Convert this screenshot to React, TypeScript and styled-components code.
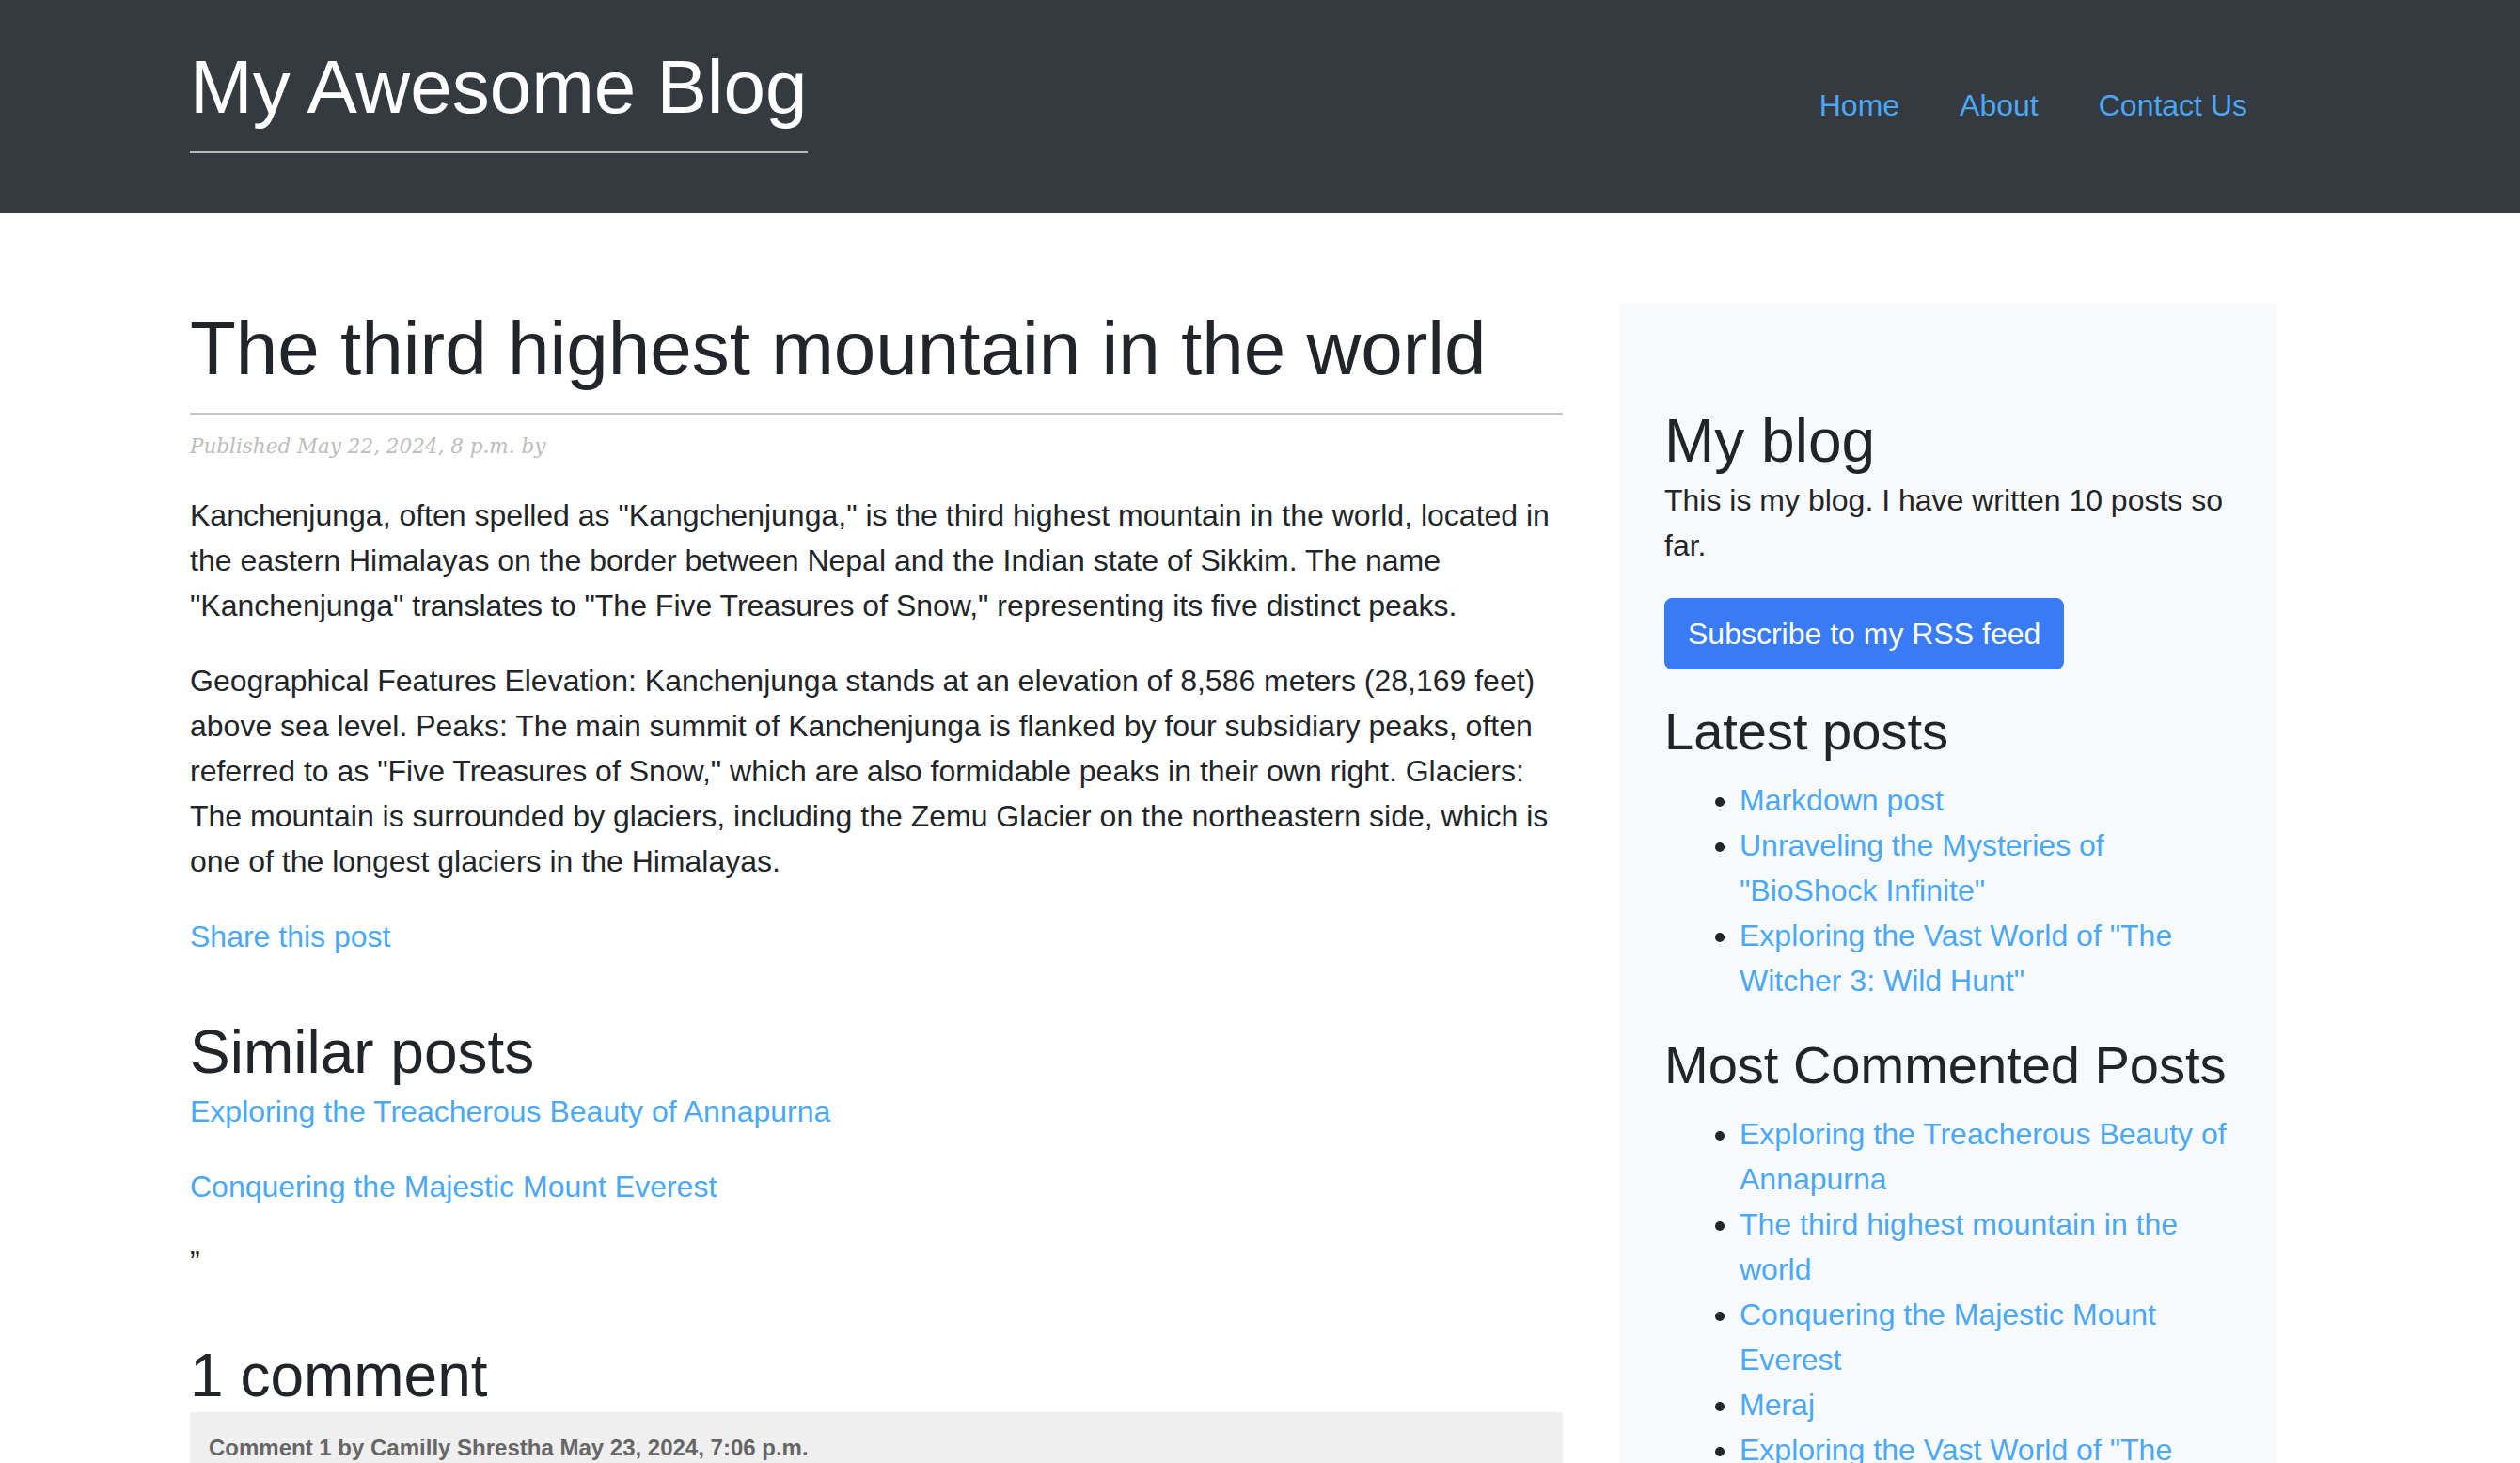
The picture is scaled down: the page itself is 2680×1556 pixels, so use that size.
import React from "react";
import styled, { createGlobalStyle } from "styled-components";

const GlobalStyle = createGlobalStyle`
  html, body {
    margin: 0;
    padding: 0;
    background: #ffffff;
  }
  body {
    font-family: "Liberation Sans", Arial, Helvetica, sans-serif;
    font-size: 32px;
    line-height: 48px;
    color: #212529;
  }
  * { box-sizing: border-box; }
`;

const LINK = "#4aa8f8";

const Header = styled.header`
  background: #343a40;
  padding: 45px 0 64px;
`;

const HeaderInner = styled.div`
  width: 2220px;
  margin-left: 202px;
  display: flex;
  justify-content: space-between;
  align-items: flex-start;
`;

const SiteTitle = styled.h1`
  display: inline-block;
  margin: 0;
  font-size: 80px;
  line-height: 96px;
  font-weight: 400;
  color: #ffffff;
  padding-bottom: 20px;
  border-bottom: 2px solid #b9b9b9;
`;

const Nav = styled.nav`
  display: flex;
  margin-top: 43px;
`;

const NavLink = styled.a`
  padding: 0 32px;
  font-size: 32px;
  line-height: 48px;
  color: ${LINK};
  text-decoration: none;
`;

const Page = styled.div`
  display: flex;
  align-items: flex-start;
  gap: 60px;
  padding: 96px 0 0 202px;
`;

const Main = styled.main`
  width: 1460px;
  flex: none;
`;

const PostTitle = styled.h1`
  margin: 0;
  font-size: 80px;
  line-height: 96px;
  font-weight: 400;
  padding-bottom: 20px;
  border-bottom: 2px solid #c6c6c6;
`;

const Meta = styled.p`
  margin: 16px 0 31px;
  font-family: "DejaVu Serif", Georgia, serif;
  font-style: italic;
  font-size: 21.5px;
  line-height: 36px;
  color: #bdbdbd;
`;

const Para = styled.p`
  margin: 0 0 32px;
`;

const Link = styled.a`
  color: ${LINK};
  text-decoration: none;
`;

const SectionHeading = styled.h2<{ $top: number }>`
  margin: ${(p) => p.$top}px 0 0;
  font-size: 64px;
  line-height: 76.8px;
  font-weight: 400;
`;

const CommentBox = styled.div`
  background: #efefef;
  padding: 20px 20px 40px;
`;

const CommentMeta = styled.div`
  font-size: 24px;
  line-height: 36px;
  font-weight: 700;
  color: #666666;
`;

const Sidebar = styled.aside`
  width: 700px;
  flex: none;
  background: #f8f9fa;
  padding: 108px 44px 48px 48px;
`;

const SideTitle = styled.h2`
  margin: 0;
  font-size: 64px;
  line-height: 76.8px;
  font-weight: 400;
`;

const SideText = styled.p`
  margin: 0 0 32px;
  padding-right: 4px;
`;

const ButtonRow = styled.div`
  margin-bottom: 32px;
`;

const Button = styled.a`
  display: inline-block;
  background: #397bf4;
  border: 1px solid #397bf4;
  color: #ffffff;
  font-size: 32px;
  line-height: 48px;
  padding: 13px 24px;
  border-radius: 8px;
  text-decoration: none;
`;

const SideHeading = styled.h3`
  margin: 0 0 16px;
  font-size: 56px;
  line-height: 67.2px;
  font-weight: 400;
`;

const List = styled.ul`
  margin: 0 0 32px;
  padding-left: 80px;
`;

const Item = styled.li`
  line-height: 48px;
`;

const latest = [
  "Markdown post",
  'Unraveling the Mysteries of "BioShock Infinite"',
  'Exploring the Vast World of "The Witcher 3: Wild Hunt"',
];

const mostCommented = [
  "Exploring the Treacherous Beauty of Annapurna",
  "The third highest mountain in the world",
  "Conquering the Majestic Mount Everest",
  "Meraj",
  'Exploring the Vast World of "The Witcher 3: Wild Hunt"',
];

export default function App() {
  return (
    <>
      <GlobalStyle />
      <Header>
        <HeaderInner>
          <SiteTitle>My Awesome Blog</SiteTitle>
          <Nav>
            <NavLink href="#">Home</NavLink>
            <NavLink href="#">About</NavLink>
            <NavLink href="#">Contact Us</NavLink>
          </Nav>
        </HeaderInner>
      </Header>
      <Page>
        <Main>
          <PostTitle>The third highest mountain in the world</PostTitle>
          <Meta>Published May 22, 2024, 8 p.m. by</Meta>
          <Para>
            Kanchenjunga, often spelled as "Kangchenjunga," is the third highest mountain in the
            world, located in the eastern Himalayas on the border between Nepal and the Indian state
            of Sikkim. The name "Kanchenjunga" translates to "The Five Treasures of Snow,"
            representing its five distinct peaks.
          </Para>
          <Para>
            Geographical Features Elevation: Kanchenjunga stands at an elevation of 8,586 meters
            (28,169 feet) above sea level. Peaks: The main summit of Kanchenjunga is flanked by four
            subsidiary peaks, often referred to as "Five Treasures of Snow," which are also
            formidable peaks in their own right. Glaciers: The mountain is surrounded by glaciers,
            including the Zemu Glacier on the northeastern side, which is one of the longest
            glaciers in the Himalayas.
          </Para>
          <Para>
            <Link href="#">Share this post</Link>
          </Para>
          <SectionHeading $top={61}>Similar posts</SectionHeading>
          <Para>
            <Link href="#">Exploring the Treacherous Beauty of Annapurna</Link>
          </Para>
          <Para>
            <Link href="#">Conquering the Majestic Mount Everest</Link>
          </Para>
          <Para>”</Para>
          <SectionHeading $top={59}>1 comment</SectionHeading>
          <CommentBox>
            <CommentMeta>Comment 1 by Camilly Shrestha May 23, 2024, 7:06 p.m.</CommentMeta>
          </CommentBox>
        </Main>
        <Sidebar>
          <SideTitle>My blog</SideTitle>
          <SideText>This is my blog. I have written 10 posts so far.</SideText>
          <ButtonRow>
            <Button href="#">Subscribe to my RSS feed</Button>
          </ButtonRow>
          <SideHeading>Latest posts</SideHeading>
          <List>
            {latest.map((t) => (
              <Item key={t}>
                <Link href="#">{t}</Link>
              </Item>
            ))}
          </List>
          <SideHeading>Most Commented Posts</SideHeading>
          <List>
            {mostCommented.map((t) => (
              <Item key={t}>
                <Link href="#">{t}</Link>
              </Item>
            ))}
          </List>
        </Sidebar>
      </Page>
    </>
  );
}
